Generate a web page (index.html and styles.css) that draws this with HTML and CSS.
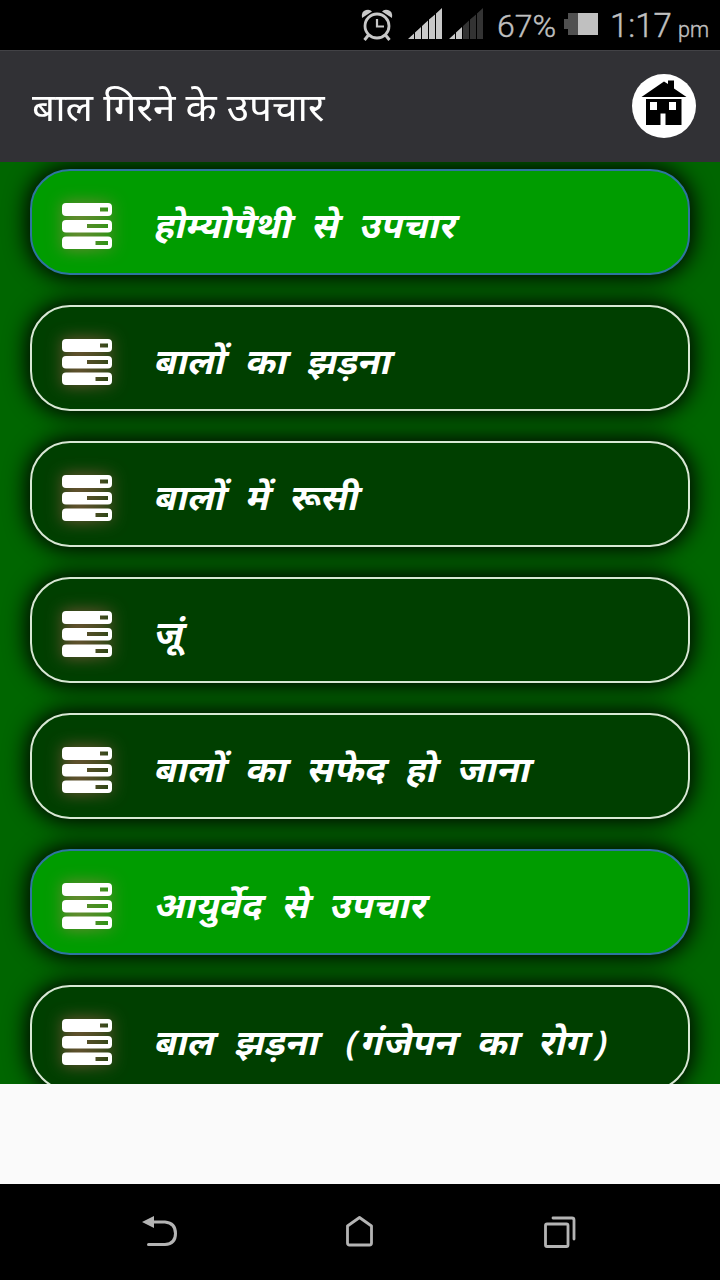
FILE: index.html
```html
<!DOCTYPE html>
<html lang="hi">
<head>
<meta charset="utf-8">
<title>बाल गिरने के उपचार</title>
<link rel="stylesheet" href="styles.css">
</head>
<body>
<svg class="defs" width="0" height="0">
  <symbol id="stack" viewBox="0 0 50 46">
    <path fill="#fff" fill-rule="evenodd" d="M4 0H46Q50 0 50 4V9Q50 13 46 13H4Q0 13 0 9V4Q0 0 4 0ZM38 4.500V8.500H46V4.500ZM4 17H46Q50 17 50 21V25.500Q50 29.500 46 29.500H4Q0 29.500 0 25.500V21Q0 17 4 17ZM25 21V25H46V21ZM4 33.500H46Q50 33.500 50 37.500V42Q50 46 46 46H4Q0 46 0 42V37.500Q0 33.500 4 33.500ZM33.500 38V42H46V38Z"/>
  </symbol>
</svg>
<div class="status">
  <svg class="alarm" width="32" height="34" viewBox="0 0 32 34" fill="none" stroke="#c8c8c8">
    <circle cx="16" cy="18" r="12" stroke-width="2.800"/>
    <path d="M16 11V18.500H23" stroke-width="2.200"/>
    <path d="M7.500 27L3.500 32M24.500 27L28.500 32" stroke-width="3"/>
    <path d="M1 10Q0 3 5 2Q9 1 11 3.500ZM31 10Q32 3 27 2Q23 1 21 3.500Z" fill="#c8c8c8" stroke="none"/>
  </svg>
  <svg class="signal-a" width="34" height="31" viewBox="0 0 34 31" fill="#c8c8c8">
    <path d="M0 31L6 25.500V31ZM7 31V24.500L13 19V31ZM14 31V18L20 12.500V31ZM21 31V11.500L27 6.500V31ZM28 31V5.500L34 0V31Z"/>
  </svg>
  <svg class="signal-b" width="34" height="31" viewBox="0 0 34 31">
    <path fill="#c8c8c8" d="M0 31L6 25.500V31ZM7 31V24.500L13 19V31Z"/>
    <path fill="#333" d="M14 31V18L20 12.500V31ZM21 31V11.500L27 6.500V31ZM28 31V5.500L34 0V31Z"/>
  </svg>
  <span class="percent">67%</span>
  <svg class="battery" width="34" height="22" viewBox="0 0 34 22">
    <path fill="#505050" d="M4 0H14V22H4V16H0V6H4Z"/>
    <path fill="#c0c0c0" d="M14 0H34V22H14Z"/>
  </svg>
  <span class="clock">1:17</span><span class="ampm">pm</span>
</div>
<header class="header">
  <h1 class="title">बाल गिरने के उपचार</h1>
  <svg class="home" width="64" height="64" viewBox="0 0 64 64">
    <circle cx="32" cy="32" r="32" fill="#fff"/>
    <path d="M9.500 23L32 7.500L36 10V6.500H42V14.500L54.500 23Z"/>
    <path fill-rule="evenodd" d="M14 25H49.500V51H33.500V39.500H28.500V51H14ZM18 28V36H25V28ZM37 28V36H44V28Z"/>
  </svg>
</header>
<main class="list">
  <div class="card active"><svg class="icon"><use href="#stack"/></svg><span class="label">होम्योपैथी से उपचार</span></div>
  <div class="card"><svg class="icon"><use href="#stack"/></svg><span class="label">बालों का झड़ना</span></div>
  <div class="card"><svg class="icon"><use href="#stack"/></svg><span class="label">बालों में रूसी</span></div>
  <div class="card"><svg class="icon"><use href="#stack"/></svg><span class="label">जूं</span></div>
  <div class="card"><svg class="icon"><use href="#stack"/></svg><span class="label">बालों का सफेद हो जाना</span></div>
  <div class="card active"><svg class="icon"><use href="#stack"/></svg><span class="label">आयुर्वेद से उपचार</span></div>
  <div class="card"><svg class="icon"><use href="#stack"/></svg><span class="label">बाल झड़ना <span class="paren">(</span>गंजेपन का रोग<span class="paren">)</span></span></div>
</main>
<div class="banner"></div>
<nav class="nav">
  <svg width="36" height="32" viewBox="0 0 36 32" fill="none" stroke="#b4b4b4" stroke-width="3" stroke-linecap="round">
    <path d="M10 6H23Q33.500 7 33.500 17.500Q33.500 28 23 28.500H6.500"/>
    <path d="M0 6L12 0V12Z" fill="#b4b4b4" stroke="none"/>
  </svg>
  <svg width="28" height="32" viewBox="0 0 28 32" fill="none" stroke="#b4b4b4" stroke-width="2.800" stroke-linejoin="round">
    <path d="M13.500 1.500L25.500 10V27Q25.500 29 23.500 29H3.500Q1.500 29 1.500 27V10Z"/>
  </svg>
  <svg class="recents" width="32" height="32" viewBox="0 0 32 32" fill="none" stroke="#b4b4b4" stroke-width="2.800" stroke-linecap="round" stroke-linejoin="round">
    <rect x="1.500" y="8" width="22.500" height="22.500" rx="1.500"/>
    <path d="M9 2H28Q30 2 30 4V23"/>
  </svg>
</nav>
</body>
</html>
```
FILE: styles.css
```css
* { box-sizing: border-box; }
body { margin: 0; width: 720px; height: 1280px; overflow: hidden; display: flex; flex-direction: column; background: #000; font-family: Roboto, "Noto Sans", sans-serif; }
svg { display: block; flex: none; }
.defs { position: absolute; }
.status { height: 50px; flex: none; display: flex; align-items: flex-start; padding-left: 361px; color: #c0c0c0; white-space: nowrap; -webkit-text-stroke: .4px #c0c0c0; }
.alarm { margin-top: 8px; }
.signal-a { margin: 8px 0 0 15px; }
.signal-b { margin: 8px 0 0 7px; }
.percent { width: 67px; margin-left: 14px; font-size: 32px; line-height: 52px; font-weight: 300; }
.battery { margin-top: 13px; }
.clock { margin-left: 12px; width: 68px; font-size: 33px; line-height: 52px; font-weight: 300; }
.ampm { font-size: 21.500px; line-height: 60px; font-weight: 300; }
.header { height: 112px; flex: none; display: flex; align-items: center; justify-content: space-between; padding: 0 24px 2px 32px; background: #313135; border-top: 1px solid #424246; }
.title { margin: 0; padding-top: 4px; font-size: 38px; font-weight: 400; line-height: 56px; color: #fff; white-space: nowrap; transform-origin: 0 50%; transform: scaleX(1.066); }
.list { height: 922px; flex: none; overflow: hidden; display: flex; flex-direction: column; gap: 30px; padding: 7px 30px 0; background: #060; }
.card { height: 106px; flex: none; display: flex; align-items: center; padding: 8px 0 0 30px; border: 2px solid #d8e8d4; border-radius: 40px; background: #003f00; box-shadow: 0 0 22px 3px #000; }
.active { border-color: #2e75a0; background: #009c00; }
.icon { width: 50px; height: 46px; overflow: visible; filter: drop-shadow(0 0 8px rgba(255, 110, 120, .5)); }
.label { margin-left: 41px; color: #fff; font-size: 35.500px; font-weight: 700; line-height: 48px; white-space: nowrap; word-spacing: 11px; transform-origin: 0 75%; transform: skewX(-13deg) scaleX(1.03); }
.paren { padding: 0 4px 0 6px; font-family: "Noto Sans", sans-serif; font-size: 34px; font-weight: 600; }
.banner { height: 100px; flex: none; background: #fafafa; }
.nav { height: 96px; flex: none; display: flex; align-items: flex-start; gap: 168px; padding: 32px 0 0 142px; }
.recents { margin-left: 2px; }
```
